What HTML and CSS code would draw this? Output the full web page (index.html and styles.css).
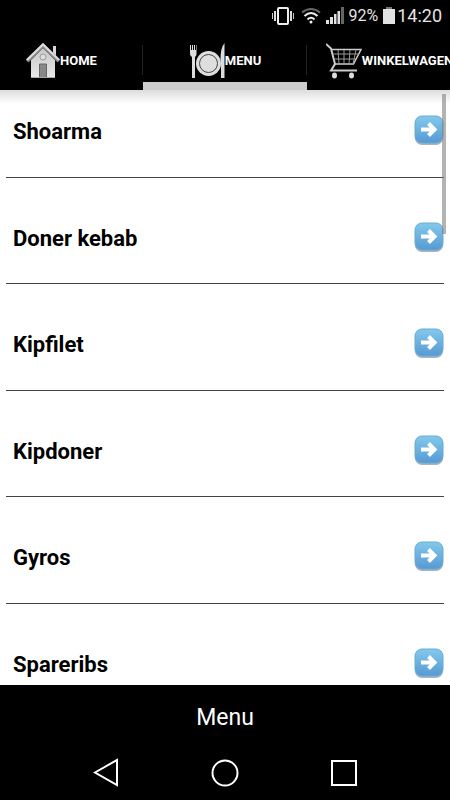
FILE: index.html
```html
<!DOCTYPE html>
<html lang="nl">
<head>
<meta charset="utf-8">
<meta name="viewport" content="width=device-width, initial-scale=1">
<title>Menu</title>
<link rel="stylesheet" href="styles.css">
</head>
<body>
<svg class="defs" width="0" height="0" aria-hidden="true">
  <defs>
    <linearGradient id="blue" x1="0" y1="0" x2="0" y2="1">
      <stop offset="0" stop-color="#83c9ec"/>
      <stop offset="1" stop-color="#5799d3"/>
    </linearGradient>
    <linearGradient id="wall" x1="0" y1="0" x2="0" y2="1">
      <stop offset="0" stop-color="#c8c8c8"/>
      <stop offset="1" stop-color="#e8e8e8"/>
    </linearGradient>
    <symbol id="go" viewBox="0 0 30 30">
      <rect x="1" y="2" width="28" height="28" rx="7" fill="#a9b4bd"/>
      <rect x="1" y="1" width="28" height="27" rx="7" fill="url(#blue)" stroke="#68abd4"/>
      <path d="M7 14.500h13M14.500 8.500l6 6-6 6" fill="none" stroke="#fff" stroke-width="4"/>
    </symbol>
  </defs>
</svg>
<header class="status">
  <svg width="24" height="20" viewBox="0 0 24 20" aria-hidden="true">
    <rect x="7" y="2" width="10" height="16" rx="1" fill="none" stroke="#eee" stroke-width="2"/>
    <path d="M4 5v10M20 5v10" stroke="#ddd" stroke-width="2"/>
    <path d="M1.500 7v6M22.500 7v6" stroke="#ccc"/>
  </svg>
  <svg class="wifi" width="20" height="20" viewBox="0 0 20 20" aria-hidden="true" fill="none" stroke-width="2">
    <path d="M1 6.500Q10 -.500 19 6.500" stroke="#666"/>
    <path d="M3.500 10Q10 4 16.500 10M6.500 13.500Q10 10 13.500 13.500" stroke="#eee"/>
    <circle cx="10" cy="16" r="1.500" fill="#eee"/>
  </svg>
  <svg width="18" height="20" viewBox="0 0 18 20" aria-hidden="true" fill="#e0e0e0">
    <path d="M0 14h3v4H0zM4 11h3v7H4zM8 8h2.500v10H8zM11.500 5H14v13h-2.500z"/>
    <path d="M15 1h3v17h-3z" fill="#666"/>
  </svg>
  <span class="percent">92%</span>
  <svg class="battery" width="12" height="20" viewBox="0 0 12 20" aria-hidden="true">
    <path d="M3 1h6v2H3z" fill="#777"/><path d="M0 3h12v15H0z" fill="#e2e2e2"/>
  </svg>
  <span class="clock">14:20</span>
</header>
<nav class="tabs" aria-label="Tabs">
  <a class="tab" href="#home">
    <svg width="34" height="36" viewBox="0 0 34 36" aria-hidden="true">
      <path d="M27 3h3v10l-3-3z" fill="#d8d8d8"/>
      <path d="M5 17L17 5l12 12v18H5z" fill="url(#wall)"/>
      <path d="M1 18L17 2.500 33 18" fill="none" stroke="#8a8a8a" stroke-width="4"/>
      <path d="M1 17L17 1.500 33 17" fill="none" stroke="#ddd" stroke-width="2"/>
      <circle cx="17" cy="14" r="3" fill="#ddd" stroke="#999"/>
      <path d="M13.500 35V21h7v14" fill="#888" stroke="#666"/>
      <path d="M5 34.500h24" stroke="#aaa"/>
    </svg>
    <span>HOME</span>
  </a>
  <a class="tab active" href="#menu" aria-current="page">
    <svg width="35" height="36" viewBox="0 0 35 36" aria-hidden="true" fill="#dedede">
      <path d="M0 2h1v5h1V2h1v5h1V2h1v5h1V2h.500v9q0 2-1.500 3v21H2V14q-2-1-2-3z"/>
      <path d="M34.500 0v35H31V20l-.500-4q0-11 4-16z"/>
      <circle cx="18.500" cy="20.500" r="12.500"/>
      <circle cx="18.500" cy="20.500" r="9" fill="none" stroke="#444"/>
    </svg>
    <span>MENU</span>
  </a>
  <a class="tab" href="#cart">
    <svg width="36" height="36" viewBox="0 0 36 36" aria-hidden="true" fill="none" stroke="#ccc">
      <path d="M0 1L5 5.500 9 21l-4 6.500h26" stroke-width="2"/>
      <path d="M6 6.500h29L27.500 21H9" stroke-width="1.500"/>
      <path d="M7 11h26M8 16h22M12 7l1 14M18 7v14M24 7l-1 14M30 7l-3 14" stroke="#999"/>
      <ellipse cx="8.500" cy="32.500" rx="2.500" ry="3" fill="#ddd" stroke="none"/>
      <ellipse cx="25.500" cy="32.500" rx="2.500" ry="3" fill="#ddd" stroke="none"/>
    </svg>
    <span>WINKELWAGEN</span>
  </a>
</nav>
<main class="content">
  <ul class="list">
    <li><a class="row" href="#shoarma">Shoarma<svg width="30" height="30" aria-hidden="true"><use href="#go"/></svg></a></li>
    <li><a class="row" href="#doner">Doner kebab<svg width="30" height="30" aria-hidden="true"><use href="#go"/></svg></a></li>
    <li><a class="row" href="#kipfilet">Kipfilet<svg width="30" height="30" aria-hidden="true"><use href="#go"/></svg></a></li>
    <li><a class="row" href="#kipdoner">Kipdoner<svg width="30" height="30" aria-hidden="true"><use href="#go"/></svg></a></li>
    <li><a class="row" href="#gyros">Gyros<svg width="30" height="30" aria-hidden="true"><use href="#go"/></svg></a></li>
    <li><a class="row" href="#spareribs">Spareribs<svg width="30" height="30" aria-hidden="true"><use href="#go"/></svg></a></li>
  </ul>
  <div class="thumb"></div>
</main>
<footer>
  <h1 class="title">Menu</h1>
  <div class="keys">
    <button type="button" aria-label="Back"><svg width="30" height="30" viewBox="0 0 30 30"><path d="M4 14.500L26 2v25z"/></svg></button>
    <button type="button" aria-label="Home"><svg width="30" height="30" viewBox="0 0 30 30"><circle cx="15" cy="15" r="12.500"/></svg></button>
    <button type="button" aria-label="Recent"><svg width="30" height="30" viewBox="0 0 30 30"><path d="M3 3h24v24H3z"/></svg></button>
  </div>
</footer>
</body>
</html>
```
FILE: styles.css
```css
* {
  box-sizing: border-box;
}

body {
  margin: 0;
  height: 100vh;
  display: flex;
  flex-direction: column;
  overflow: hidden;
  background: #000;
  color: #fff;
  font-family: Roboto, "Liberation Sans", sans-serif;
}

svg {
  flex: none;
}

a {
  color: inherit;
  text-decoration: none;
}

.defs {
  position: absolute;
}

.status {
  flex: none;
  height: 34px;
  padding: 0 8px 3px 0;
  display: flex;
  align-items: center;
  justify-content: flex-end;
  color: #e4e4e4;
}

.wifi {
  margin: 0 5px 0 6px;
}

.percent {
  margin-left: 4px;
  font-size: 16px;
}

.battery {
  margin: 0 2px 0 5px;
}

.clock {
  font-size: 18px;
}

.tabs {
  flex: none;
  display: flex;
  height: 56px;
  margin-left: -21px;
}

.tab {
  flex: none;
  width: 164px;
  display: flex;
  align-items: center;
  justify-content: center;
  padding: 5px 0 0 1px;
  border-bottom: 8px solid transparent;
  background: linear-gradient(#222, #222) right 11px / 1px 30px no-repeat;
  font-size: 13px;
  font-weight: 700;
}

.tab.active {
  border-bottom-color: #ccc;
}

.content {
  position: relative;
  flex: 1;
  min-height: 0;
  overflow: hidden;
  background: linear-gradient(#dcdcdc, #fff 14px);
  color: #000;
}

.list {
  list-style: none;
  margin: 0;
  padding: 0 6px;
}

.row {
  display: flex;
  align-items: center;
  justify-content: space-between;
  height: 107px;
  padding: 15px 0 0 7px;
  border-bottom: 1px solid #444;
  font-size: 22px;
  font-weight: 700;
}

.row svg {
  margin-bottom: 3px;
}

li:nth-child(even) .row {
  height: 106px;
}

li:first-child .row {
  height: 88px;
  padding-top: 0;
  padding-bottom: 4px;
}

.thumb {
  position: absolute;
  top: 4px;
  right: 4px;
  width: 4px;
  height: 140px;
  background: rgba(128, 128, 128, 0.6);
}

.title {
  margin: 0;
  padding-top: 19px;
  font-size: 23px;
  line-height: 28px;
  font-weight: 400;
  text-align: center;
}

.keys {
  display: flex;
  justify-content: center;
  gap: 89px;
  padding: 26px 0 12px;
}

.keys button {
  padding: 0;
  border: 0;
  background: none;
  display: flex;
}

.keys svg {
  fill: none;
  stroke: #fff;
  stroke-width: 2;
}
```
